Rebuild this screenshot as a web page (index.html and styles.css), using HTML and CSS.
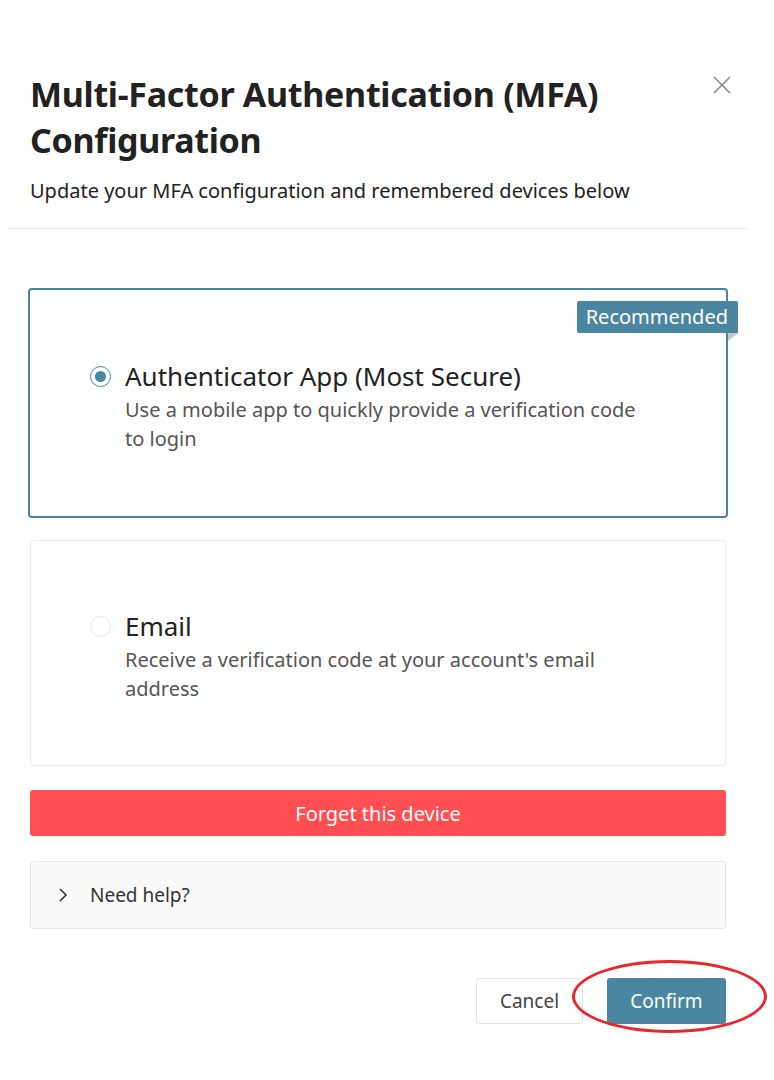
FILE: index.html
```html
<!DOCTYPE html>
<html lang="en">
<head>
<meta charset="utf-8">
<title>MFA Configuration</title>
<link rel="stylesheet" href="styles.css">
</head>
<body>
<div class="modal">
  <header class="modal-header">
    <div class="header-text">
      <h1 class="title">Multi-Factor Authentication (MFA) Configuration</h1>
      <p class="subtitle">Update your MFA configuration and remembered devices below</p>
    </div>
    <button class="close" aria-label="Close">
      <svg width="20" height="20" viewBox="0 0 20 20"><path d="M2 2 L18 18 M18 2 L2 18" stroke="#8a8a8a" stroke-width="1.6" fill="none"/></svg>
    </button>
  </header>
  <main class="modal-body">
    <label class="option option-selected">
      <span class="badge">Recommended</span>
      <span class="radio radio-on"></span>
      <span class="option-text">
        <span class="option-title">Authenticator App (Most Secure)</span>
        <span class="option-desc">Use a mobile app to quickly provide a verification code to login</span>
      </span>
    </label>
    <label class="option">
      <span class="radio"></span>
      <span class="option-text">
        <span class="option-title">Email</span>
        <span class="option-desc">Receive a verification code at your account's email address</span>
      </span>
    </label>
    <button class="forget">Forget this device</button>
    <div class="help">
      <svg class="chev" width="10" height="16" viewBox="0 0 10 16"><path d="M2 2 L8 8 L2 14" stroke="#333" stroke-width="1.6" fill="none"/></svg>
      <span>Need help?</span>
    </div>
    <div class="actions">
      <button class="btn btn-cancel">Cancel</button>
      <span class="confirm-wrap">
        <button class="btn btn-confirm">Confirm</button>
      </span>
    </div>
  </main>
</div>
</body>
</html>
```

FILE: styles.css
```css
*, *::before, *::after { box-sizing: border-box; }
html, body { margin: 0; padding: 0; background: #fff; }
body {
  font-family: "Noto Sans", "Open Sans", sans-serif;
  color: #222;
}
.modal {
  width: 740px;
  margin-left: 8px;
  padding-bottom: 60px;
}
.modal-header {
  display: flex;
  justify-content: space-between;
  align-items: flex-start;
  padding: 71px 16px 23px 22px;
  border-bottom: 1px solid #ececec;
}
.title {
  margin: 0;
  font-size: 34px;
  font-weight: 700;
  line-height: 46px;
  color: #222;
  letter-spacing: -0.3px;
}
.subtitle {
  margin: 14px 0 0;
  font-size: 20px;
  line-height: 28px;
  color: #222;
}
.close {
  background: none;
  border: 0;
  padding: 0;
  margin-top: 4px;
  width: 20px;
  height: 20px;
  cursor: pointer;
}
.modal-body {
  padding: 59px 22px 0;
  display: flex;
  flex-direction: column;
}
.option {
  position: relative;
  display: flex;
  align-items: flex-start;
  border: 1px solid #ececec;
  border-radius: 3px;
  padding: 68px 20px 62px 59px;
  margin-bottom: 24px;
}
.option-selected {
  border: 2px solid #4a86a0;
  border-radius: 4px;
  margin: 0 -2px 22px;
  padding: 69px 20px 63px 60px;
}
.radio {
  flex: none;
  width: 21px;
  height: 21px;
  border-radius: 50%;
  border: 1px solid #e2e2e2;
  margin-top: 7px;
  margin-right: 14px;
  background: #fff;
}
.radio-on {
  border-color: #4a86a0;
  display: flex;
  align-items: center;
  justify-content: center;
}
.radio-on::after {
  content: "";
  width: 11px;
  height: 11px;
  border-radius: 50%;
  background: #4a86a0;
}
.option-text {
  display: flex;
  flex-direction: column;
  width: 515px;
}
.option-title {
  font-size: 26px;
  line-height: 34px;
  color: #222;
}
.option-desc {
  margin-top: 2px;
  font-size: 20px;
  line-height: 29px;
  color: #555;
}
.badge {
  position: absolute;
  top: 11px;
  right: -12px;
  background: #4a86a0;
  color: #fff;
  font-size: 20px;
  line-height: 32px;
  padding: 0 10px 0 9px;
  border-radius: 2px 2px 0 2px;
}
.badge::after {
  content: "";
  position: absolute;
  right: 0;
  bottom: -8px;
  border-top: 8px solid #c9c9c9;
  border-right: 10px solid transparent;
}
.forget {
  height: 46px;
  border: 0;
  border-radius: 3px;
  background: #ff4f52;
  color: #fff;
  font-family: inherit;
  font-size: 20px;
  cursor: pointer;
  margin-bottom: 25px;
}
.help {
  display: flex;
  align-items: center;
  height: 68px;
  background: #fafafa;
  border: 1px solid #e6e6e6;
  border-radius: 3px;
  padding-left: 27px;
  font-size: 19px;
  color: #333;
}
.chev { margin-right: 22px; }
.actions {
  display: flex;
  justify-content: flex-end;
  align-items: center;
  margin-top: 49px;
}
.btn {
  height: 46px;
  border-radius: 3px;
  font-family: inherit;
  font-size: 19px;
  cursor: pointer;
}
.btn-cancel {
  background: #fff;
  border: 1px solid #e3e3e3;
  color: #444;
  width: 107px;
  margin-right: 24px;
}
.confirm-wrap {
  position: relative;
  display: inline-flex;
}
.confirm-wrap::before {
  content: "";
  position: absolute;
  left: -35px;
  top: -18px;
  width: 195px;
  height: 73px;
  border: 3px solid #e8262c;
  border-radius: 50%;
  pointer-events: none;
}
.btn-confirm {
  background: #4a86a0;
  border: 0;
  color: #fff;
  width: 119px;
}
```
